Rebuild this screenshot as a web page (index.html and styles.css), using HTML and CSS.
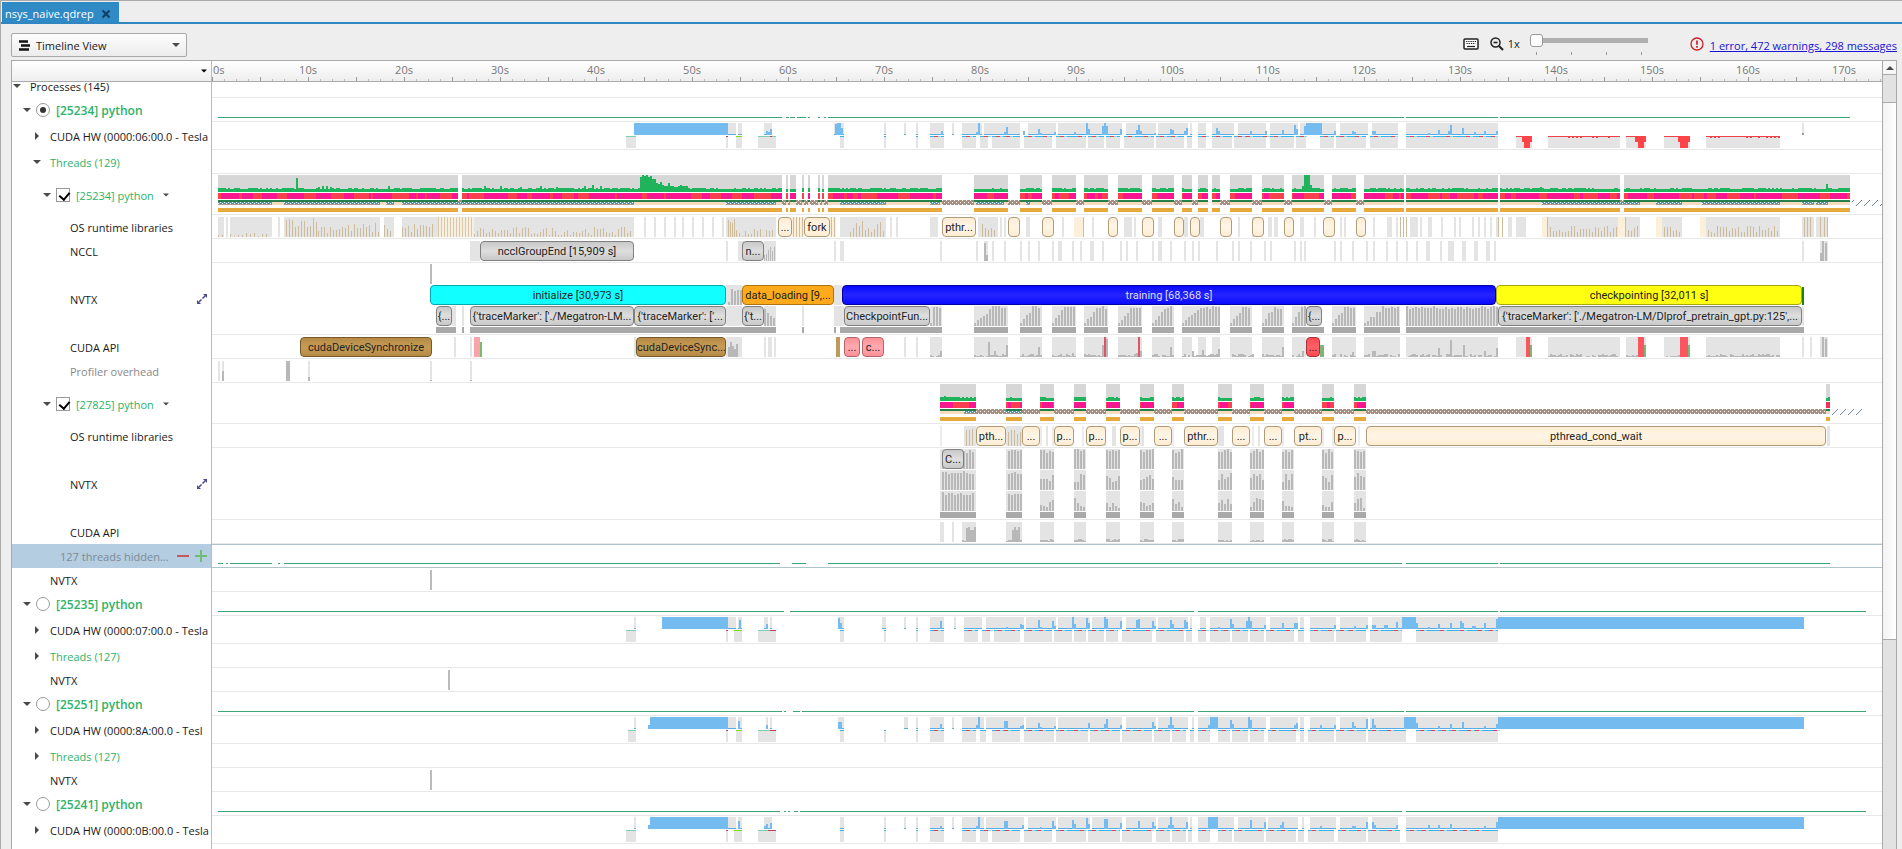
FILE: index.html
```html
<!DOCTYPE html>
<html lang="en">
<head>
<meta charset="utf-8">
<title>nsys_naive.qdrep</title>
<link rel="stylesheet" href="styles.css">
</head>
<body>
<svg class="defs" aria-hidden="true">
  <defs>
    <symbol id="i-down" viewBox="0 0 8 8"><path d="M0 2h8L4 6z" fill="currentColor"/></symbol>
    <symbol id="i-right" viewBox="0 0 8 8"><path d="M2 0v8l4-4z" fill="currentColor"/></symbol>
    <symbol id="i-up" viewBox="0 0 8 8"><path d="M0 6h8L4 2z" fill="currentColor"/></symbol>
    <symbol id="i-zoomto" viewBox="0 0 12 12"><path d="M3 9l2.500-2.500M6.500 5.500L9 3" stroke="#4a4a90" stroke-width="1.500"/><path d="M7 1h4v4zM1 7v4h4z" fill="#4a4a90"/></symbol>
    <pattern id="wait" width="4" height="4" patternUnits="userSpaceOnUse"><rect width="4" height="4" fill="#a58f80"/><path d="M0 0h1v1h-1zM2 2h1v1h-1z" fill="#fff"/></pattern>
    <pattern id="busy" width="4" height="2" patternUnits="userSpaceOnUse"><rect width="4" height="2" fill="#4d96b8"/><path d="M0 0h1v1h-1zM2 1h1v1h-1z" fill="#fff"/></pattern>
    <pattern id="gone" y="2" width="8" height="6" patternUnits="userSpaceOnUse"><path d="M0 6L6 0" stroke="#6a7fae" fill="none"/></pattern>
  </defs>
</svg>

<nav class="tabs">
  <div class="tab"><span>nsys_naive.qdrep</span>
    <button class="icon-btn" aria-label="Close tab"><svg width="10" height="10" viewBox="0 0 10 10"><path d="M1.500 1.500l7 7M8.500 1.500l-7 7" stroke="#0d3f63" stroke-width="2"/></svg></button>
  </div>
</nav>

<header class="toolbar">
  <div class="view-picker">
    <svg class="lead" width="11" height="11" viewBox="0 0 11 11"><path d="M0 1.500h9M2 5.500h9M0 9.500h10" stroke="#111" stroke-width="2.500"/></svg>
    <select aria-label="View"><option>Timeline View</option></select>
    <svg class="caret" width="8" height="8"><use href="#i-down"/></svg>
  </div>
  <div class="zoombar">
    <button class="icon-btn" aria-label="Keyboard shortcuts"><svg width="16" height="12" viewBox="0 0 16 12"><rect x="1" y="1" width="14" height="10" rx="1" fill="#fff" stroke="#222" stroke-width="1.500"/><path d="M3 3.500h10M3.500 5.500h9" stroke="#222" stroke-width="1.200" stroke-dasharray="1.300 .9"/><path d="M4 8.500h8" stroke="#222" stroke-width="1.200"/></svg></button>
    <button class="icon-btn" aria-label="Reset zoom"><svg width="14" height="14" viewBox="0 0 14 14"><circle cx="5.500" cy="5.500" r="4.500" fill="none" stroke="#222" stroke-width="1.500"/><path d="M3.500 5.500h4" stroke="#222" stroke-width="1.600"/><path d="M9 9l4 4" stroke="#222" stroke-width="2.200"/></svg></button>
    <label for="zoom">1x</label>
    <div class="slider">
      <input id="zoom" type="range" min="1" max="100" value="1">
      <div class="marks"><i></i><i></i><i></i><i></i></div>
    </div>
  </div>
  <svg class="alert" width="14" height="14" viewBox="0 0 14 14"><circle cx="7" cy="7" r="6" fill="none" stroke="#c8202c" stroke-width="1.300"/><path d="M7 3.500v4.300M7 9v1.700" stroke="#c8202c" stroke-width="1.700"/></svg>
  <a href="#messages">1 error, 472 warnings, 298 messages</a>
</header>

<main class="frame">
  <section class="timeline">
    <div class="row head">
      <div class="label"><button class="icon-btn dark" aria-label="Row options"><svg width="6" height="6"><use href="#i-down"/></svg></button></div>
      <div class="track" id="ruler"></div>
    </div>
    <div class="rows">
      <div class="row l0"><div class="label"><button class="icon-btn" aria-label="Collapse"><svg width="8" height="8"><use href="#i-down"/></svg></button><span>Processes (145)</span></div><div class="track"></div></div>

      <div class="row l1"><div class="label"><button class="icon-btn" aria-label="Collapse"><svg width="8" height="8"><use href="#i-down"/></svg></button><input type="radio" name="proc" id="p1" checked><label for="p1">[25234] python</label></div><div class="track" data-track="cpu1"></div></div>
      <div class="row l2 gpu"><div class="label"><button class="icon-btn" aria-label="Expand"><svg width="8" height="8"><use href="#i-right"/></svg></button><span>CUDA HW (0000:06:00.0 - Tesla</span></div><div class="track" data-track="gpu1"></div></div>
      <div class="row l2"><div class="label green"><button class="icon-btn" aria-label="Collapse"><svg width="8" height="8"><use href="#i-down"/></svg></button><span>Threads (129)</span></div><div class="track"></div></div>

      <div class="row l3 thread"><div class="label green"><button class="icon-btn" aria-label="Collapse"><svg width="8" height="8"><use href="#i-down"/></svg></button><input type="checkbox" id="t1" checked><label for="t1">[25234] python</label><button class="icon-btn more" aria-label="Thread options"><svg width="6" height="6"><use href="#i-down"/></svg></button></div><div class="track" data-track="thread1"></div></div>
      <div class="row l4"><div class="label"><span>OS runtime libraries</span></div><div class="track" data-track="os1"></div></div>
      <div class="row l4"><div class="label"><span>NCCL</span></div><div class="track" data-track="nccl"></div></div>
      <div class="row l4 nvtx"><div class="label"><span>NVTX</span><button class="icon-btn end" aria-label="Fit row"><svg width="12" height="12"><use href="#i-zoomto"/></svg></button></div><div class="track" data-track="nvtx1"></div></div>
      <div class="row l4"><div class="label"><span>CUDA API</span></div><div class="track" data-track="api1"></div></div>
      <div class="row l4"><div class="label muted"><span>Profiler overhead</span></div><div class="track" data-track="overhead"></div></div>

      <div class="row l3 thread"><div class="label green"><button class="icon-btn" aria-label="Collapse"><svg width="8" height="8"><use href="#i-down"/></svg></button><input type="checkbox" id="t2" checked><label for="t2">[27825] python</label><button class="icon-btn more" aria-label="Thread options"><svg width="6" height="6"><use href="#i-down"/></svg></button></div><div class="track" data-track="thread2"></div></div>
      <div class="row l4"><div class="label"><span>OS runtime libraries</span></div><div class="track" data-track="os2"></div></div>
      <div class="row l4 nvtx"><div class="label"><span>NVTX</span><button class="icon-btn end" aria-label="Fit row"><svg width="12" height="12"><use href="#i-zoomto"/></svg></button></div><div class="track" data-track="nvtx2"></div></div>
      <div class="row l4"><div class="label"><span>CUDA API</span></div><div class="track" data-track="api2"></div></div>
      <div class="row hidden-threads selected"><div class="label muted"><span>127 threads hidden...</span><button class="icon-btn end" aria-label="Show fewer"><svg width="12" height="12" viewBox="0 0 12 12"><path d="M0 6h12" stroke="#c4585e" stroke-width="2"/></svg></button><button class="icon-btn" aria-label="Show more"><svg width="12" height="12" viewBox="0 0 12 12"><path d="M0 6h12M6 0v12" stroke="#6fbf73" stroke-width="2"/></svg></button></div><div class="track" data-track="rest"></div></div>
      <div class="row l2"><div class="label leaf"><span>NVTX</span></div><div class="track" data-track="mark1"></div></div>

      <div class="row l1"><div class="label"><button class="icon-btn" aria-label="Collapse"><svg width="8" height="8"><use href="#i-down"/></svg></button><input type="radio" name="proc" id="p2"><label for="p2">[25235] python</label></div><div class="track" data-track="cpu2"></div></div>
      <div class="row l2 gpu"><div class="label"><button class="icon-btn" aria-label="Expand"><svg width="8" height="8"><use href="#i-right"/></svg></button><span>CUDA HW (0000:07:00.0 - Tesla</span></div><div class="track" data-track="gpu2"></div></div>
      <div class="row l2"><div class="label green"><button class="icon-btn" aria-label="Expand"><svg width="8" height="8"><use href="#i-right"/></svg></button><span>Threads (127)</span></div><div class="track"></div></div>
      <div class="row l2"><div class="label leaf"><span>NVTX</span></div><div class="track" data-track="mark2"></div></div>

      <div class="row l1"><div class="label"><button class="icon-btn" aria-label="Collapse"><svg width="8" height="8"><use href="#i-down"/></svg></button><input type="radio" name="proc" id="p3"><label for="p3">[25251] python</label></div><div class="track" data-track="cpu3"></div></div>
      <div class="row l2 gpu"><div class="label"><button class="icon-btn" aria-label="Expand"><svg width="8" height="8"><use href="#i-right"/></svg></button><span>CUDA HW (0000:8A:00.0 - Tesl</span></div><div class="track" data-track="gpu3"></div></div>
      <div class="row l2"><div class="label green"><button class="icon-btn" aria-label="Expand"><svg width="8" height="8"><use href="#i-right"/></svg></button><span>Threads (127)</span></div><div class="track"></div></div>
      <div class="row l2"><div class="label leaf"><span>NVTX</span></div><div class="track" data-track="mark1"></div></div>

      <div class="row l1"><div class="label"><button class="icon-btn" aria-label="Collapse"><svg width="8" height="8"><use href="#i-down"/></svg></button><input type="radio" name="proc" id="p4"><label for="p4">[25241] python</label></div><div class="track" data-track="cpu4"></div></div>
      <div class="row l2 gpu"><div class="label"><button class="icon-btn" aria-label="Expand"><svg width="8" height="8"><use href="#i-right"/></svg></button><span>CUDA HW (0000:0B:00.0 - Tesla</span></div><div class="track" data-track="gpu4"></div></div>
      <div class="row l2"><div class="label"></div><div class="track"></div></div>
    </div>
  </section>
  <div class="scrollbar">
    <button class="icon-btn" aria-label="Scroll up"><svg width="8" height="8"><use href="#i-up"/></svg></button>
    <div class="groove"><div class="thumb"></div></div>
  </div>
</main>
<script src="timeline.js"></script>
</body>
</html>
```

FILE: styles.css
```css
* { box-sizing: border-box; }

body {
  margin: 0;
  height: 100vh;
  display: flex;
  flex-direction: column;
  overflow: hidden;
  background: #eee;
  border-left: 1px solid #aaa;
  color: #1a1a1a;
  font: 11px/16px "Open Sans", "Noto Sans", sans-serif;
}

.defs { position: absolute; width: 0; height: 0; }

.icon-btn {
  display: flex;
  align-items: center;
  justify-content: center;
  flex: none;
  padding: 0;
  border: 0;
  background: none;
  color: #4a4a4a;
}

/* Document tabs */
.tabs {
  flex: none;
  display: flex;
  height: 24px;
  padding: 1px 0 0 1px;
  border-top: 1px solid #aaa;
  border-bottom: 2px solid #2f86c1;
}
.tab {
  display: flex;
  align-items: center;
  gap: 7px;
  padding: 3px 8px 0 3px;
  background: #2f8ac6;
  color: #fff;
}

/* Toolbar */
.toolbar {
  flex: none;
  display: flex;
  align-items: center;
  height: 36px;
  padding: 0 5px 0 10px;
}
.view-picker { position: relative; width: 176px; }
.view-picker select {
  appearance: none;
  width: 100%;
  height: 24px;
  margin-top: 6px;
  padding: 1px 24px 0;
  border: 1px solid #a8a8a8;
  border-radius: 2px;
  background: linear-gradient(#fefefe, #ececec);
  color: inherit;
  font: inherit;
}
.view-picker svg { position: absolute; top: 14px; pointer-events: none; color: #4a4a4a; }
.view-picker .lead { left: 8px; top: 13px; }
.view-picker .caret { right: 7px; }

.zoombar { display: flex; align-items: center; gap: 4px; margin: 4px 0 0 auto; }
.zoombar .icon-btn { margin-right: 7px; }
.zoombar .icon-btn + .icon-btn { margin-right: 0; }
.slider { width: 118px; margin: 0 42px 0 6px; }
.slider input {
  appearance: none;
  display: block;
  width: 100%;
  height: 14px;
  margin: 0;
  background: linear-gradient(#b0b0b0, #b0b0b0) center / 100% 5px no-repeat;
}
.slider input::-webkit-slider-thumb {
  appearance: none;
  width: 13px;
  height: 13px;
  border: 1px solid #999;
  border-radius: 3px;
  background: #fff;
}
.marks { display: flex; justify-content: space-between; padding: 4px 6px 0; }
.marks i { width: 1px; height: 3px; background: #999; }
.alert { margin: 4px 6px 0 0; }
.toolbar a { color: #1a13d8; margin-top: 8px; }

/* Timeline frame */
.frame {
  flex: 1;
  min-height: 0;
  display: flex;
  margin: 0 5px 0 10px;
  border: 1px solid #aaa;
  border-bottom: 0;
  background: #fff;
}
.timeline { flex: 1; min-width: 0; display: flex; flex-direction: column; }
.rows { flex: 1; min-height: 0; overflow: hidden; }
.rows .row:first-child { margin-top: -8px; }

.row { display: flex; height: 24px; }
.row.gpu { height: 28px; }
.row.thread { height: 41px; }
.row.nvtx { height: 72px; }

.label {
  flex: none;
  display: flex;
  align-items: center;
  width: 200px;
  padding-right: 1px;
  border-right: 1px solid #bbb;
  overflow: hidden;
  white-space: nowrap;
}
.label span, .label label { padding-top: 2px; }
.track {
  position: relative;
  flex: 1;
  min-width: 0;
  border-bottom: 1px solid #e8e8e8;
  overflow: hidden;
}
.track svg { display: block; width: 100%; }

.head {
  flex: none;
  height: 21px;
  background: linear-gradient(#fff, #eee);
  border-bottom: 1px solid #aaa;
}
.head .label { justify-content: flex-end; padding-right: 4px; }
.head .track { border: 0; }
.icon-btn.dark { color: #000; }
.tick-label {
  position: absolute;
  top: 1px;
  color: #777;
  transform: translateX(-50%);
}
.tick-label.first { transform: none; }

.green, .l1 label { color: #2bb368; }
.l1 label { font-size: 12px; font-weight: 600; }
.muted { color: #888; }

.l0 .label { gap: 9px; padding-left: 1px; }
.l1 .label { gap: 5px; padding-left: 11px; }
.l1 .label label { margin-left: 1px; }
.l2 .label { gap: 9px; padding-left: 21px; }
.l2 .leaf { padding-left: 38px; }
.l3 .label { gap: 5px; padding-left: 31px; }
.l3 .label label { margin-left: 1px; }
.l3 .more { margin-left: 4px; }
.l4 .label { padding-left: 58px; }
.hidden-threads .label { gap: 6px; padding: 0 4px 0 48px; }
.label .end { margin-left: auto; margin-right: 2px; }
.hidden-threads .end { margin-right: 0; }

.selected .label { background: #b4cde1; color: #7c8a96; }
.selected .track { border-bottom-color: #b0c3cd; box-shadow: inset 0 1px #b0c3cd; }

input[type="radio"], input[type="checkbox"] {
  appearance: none;
  flex: none;
  position: relative;
  width: 14px;
  height: 14px;
  margin: 0;
  border: 1px solid #999;
  background: #fff;
}
input[type="radio"] { border-radius: 50%; }
input[type="radio"]:checked::after {
  content: "";
  position: absolute;
  inset: 3px;
  border-radius: 50%;
  background: #333;
}
input[type="checkbox"]:checked::after {
  content: "";
  position: absolute;
  left: 4px;
  top: 1px;
  width: 5px;
  height: 8px;
  border: solid #000;
  border-width: 0 2px 2px 0;
  rotate: 40deg;
}

/* Named ranges drawn over a track */
.event {
  position: absolute;
  height: 20px;
  border: 1px solid #888;
  border-radius: 4px;
  color: #222;
  font: 11px/20px Roboto, sans-serif;
  text-align: center;
  white-space: nowrap;
  overflow: hidden;
}
.lane1 { top: 2px; }
.lane2 { top: 22px; }
.lane3 { top: 43px; }
.lane0 { top: 1px; }
.grey { background: linear-gradient(#c8c8c8, #dedede 50%, #c8c8c8); border-color: #808080; }
.cream { background: linear-gradient(#feecd2, #fff5e6 50%, #feecd2); border-color: #b09c78; }
.cyan { background: #1ff; border-color: #0aa; }
.orange { background: #ffa91c; border-color: #b07410; }
.blue { background: linear-gradient(#0a0aff, #2424ff 50%, #0a0aff); border-color: #0000a0; color: #dde; }
.yellow { background: #ff1; border-color: #a8a810; }
.tan { background: linear-gradient(#b48a45, #c69c55 50%, #b48a45); border-color: #775a28; }
.pink { background: linear-gradient(#ff9097, #ffaab0 50%, #ff9097); border-color: #b0666c; }
.red { background: linear-gradient(#ff4850, #ff6068 50%, #ff4850); border-color: #a83038; }

.scrollbar {
  flex: none;
  display: flex;
  flex-direction: column;
  width: 14px;
  border-left: 1px solid #aaa;
}
.scrollbar > .icon-btn { height: 13px; background: #f6f6f6; }
.groove {
  flex: 1;
  display: flex;
  flex-direction: column;
  padding-top: 27px;
  background: #e2e2e2;
  border-top: 1px solid #aaa;
}
.thumb {
  flex: none;
  height: 72%;
  border: solid #aaa;
  border-width: 1px 0;
  background: linear-gradient(90deg, #f2f2f2, #fff);
}
```

FILE: timeline.js
```js
const START = 212;
const SPAN = 1670;

const spans = text => text.trim().split(/\s+/).map(s => s.split('-').map(Number));
const pairs = text => text.trim().split(/\s+/).map(s => s.split(':').map(Number));

let seed = 7;
const rnd = () => (seed = (seed * 16807) % 2147483647) / 2147483647;

const rect = (x, y, w, h, fill) => `<rect x="${x}" y="${y}" width="${w}" height="${h}" fill="${fill}"/>`;
const fillSpans = (text, y, h, fill) => spans(text).map(([a, b]) => rect(a, y, b - a, h, fill)).join('');
const bars = (text, base, fill, w = 2) => pairs(text).map(([x, h]) => rect(x, base - h, w, h, fill)).join('');
const ticks = (list, y, h, fill, w = 2) => list.trim().split(/\s+/).map(x => rect(+x, y, w, h, fill)).join('');

function noise(text, base, lo, hi, fill, step = 2, w = step) {
  let out = '';
  for (const [a, b] of spans(text)) {
    for (let x = a; x < b - 1; x += step) {
      const h = Math.round(lo + rnd() * (hi - lo));
      if (h > 0) out += rect(x, base - h, Math.min(w, b - x), h, fill);
    }
  }
  return out;
}

// Bars that climb to full height and stay there.
function ramp(text, base, full, fill, climb = 0.45) {
  let out = '';
  for (const [a, b] of spans(text)) {
    for (let x = a; x < b - 1; x += 3) {
      const t = (x - a) / (b - a);
      const h = t < climb ? 3 + (full - 3) * t / climb * (0.6 + rnd() * 0.4) : full - rnd() * 3;
      out += rect(x, base - Math.round(h), 2, Math.round(h), fill);
    }
  }
  return out;
}

const LIGHT = '#e4e4e4', MID = '#b8b8b8', DARK = '#a9a9a9', SKY = '#74bbf0', BG = '#d7d7d7';

const busy1 = '218-458 462-782 786-788 790-796 802-804 808-810 818-820 822-824 828-942 974-1008 1020-1042 1052-1076 1084-1108 1118-1142 1152-1174 1182-1192 1198-1208 1212-1220 1230-1252 1262-1284 1292-1324 1332-1356 1364-1404 1406-1498 1500-1620 1624-1850';
const busy2 = '940-976 1006-1022 1040-1054 1074-1086 1106-1120 1140-1154 1172-1184 1218-1232 1250-1264 1282-1294 1322-1334 1354-1366 1826-1830';
const iter1 = '974-1008 1020-1042 1052-1076 1084-1108 1118-1142 1152-1174 1182-1220 1230-1252 1262-1284 1292-1306 1332-1356 1364-1400 1406-1498';

function thread(segs, wait, osrt, peaks, end, low, high) {
  let s = fillSpans(segs, 1, 17, BG) + noise(segs, 18, low, high, '#1fb45c') + fillSpans(segs, 16, 2, '#1fb45c') + bars(peaks, 18, '#1fb45c');
  s += fillSpans(segs, 19, 6, '#f8404e');
  for (const [a, b] of spans(segs)) {
    for (let x = a + Math.floor(rnd() * 6); x < b;) {
      const w = Math.min(b - x, 2 + Math.floor(rnd() * 26));
      s += rect(x, 19, w, 6, '#fb1590');
      if (w > 10) s += rect(x + 4, 22, 2, 3, '#d0307c');
      x += w + 2 + Math.floor(rnd() * 16);
    }
  }
  s += fillSpans(wait, 26, 5, 'url(#wait)');
  s += fillSpans(segs, 26, 2, '#27804a') + fillSpans(segs, 28, 3, '#f7dcc0');
  if (osrt) s += fillSpans(osrt, 28, 2, 'url(#busy)') + fillSpans(osrt, 30, 1, '#b09a8a');
  s += fillSpans(segs, 34, 4, '#e6a93c');
  s += rect(end[0], 26, end[1] - end[0], 6, 'url(#gone)');
  return s;
}

function gpu(up, down, blocks, peaks, mini, lime) {
  let s = fillSpans(up, 1, 12, LIGHT) + fillSpans(up, 12, 1, '#58ade6');
  s += fillSpans(down, 14, 12, LIGHT);
  for (const [a, b] of spans(down)) {
    if (b < 780) { s += rect(a, 14, b - a, 1, '#7fcdb4'); continue; }
    s += rect(a, 14, b - a, 1, '#35b4e8');
    for (let x = a + 4; x < b - 2; x += 8 + Math.floor(rnd() * 14)) s += rect(x, 14, 4, 1, '#d8445c') + rect(x + 4, 14, 3, 1, '#86dcec');
  }
  s += fillSpans(lime, 14, 1, '#7fe010') + fillSpans(mini, 14, 1, '#c0405a');
  return s + fillSpans(blocks, 1, 12, SKY) + bars(peaks, 13, SKY);
}

const line = text => fillSpans(text, 19, 1, '#3aa575');

const TRACKS = {
  cpu1: line('218-782 786-789 790-795 797-806 808-810 818-820 824-826 828-1404 1406-1498 1500-1850'),
  rest: line('218-223 226-228 230-272 278-280 284-780 792-806 828-1402 1406-1498 1500-1830'),
  cpu2: line('218-784 790-1194 1198-1498 1500-1866'),
  cpu3: line('218-782 784-786 793-800 802-1194 1198-1404 1406-1866'),
  cpu4: line('218-780 784-786 788-790 794-798 800-1402 1406-1866'),

  gpu1: gpu(
    '728-736 738-742 764-772 834-844 884-886 904-906 916-918 930-944 952-954 962-982 984-1020 1028-1056 1058-1122 1126-1156 1158-1188 1190-1192 1198-1206 1212-1234 1238-1266 1270-1298 1300-1336 1340-1368 1372-1398 1406-1498',
    '626-636 726-728 736-742 758-776 840-844 884-886 916-918 930-944 962-976 980-988 992-1020 1024-1052 1056-1086 1088-1104 1106-1120 1124-1154 1156-1184 1187-1192 1198-1206 1212-1232 1234-1266 1270-1294 1296-1306 1320-1334 1336-1366 1370-1398 1406-1498',
    '634-728 1306-1322',
    '766:4 768:3 770:6 835:11 837:12 839:12 841:7 941:4 976:3 978:12 1004:3 1006:8 1023:4 1038:6 1040:2 1054:3 1074:3 1086:12 1088:6 1102:9 1104:12 1106:9 1120:6 1136:5 1138:10 1140:4 1154:2 1170:6 1172:5 1184:4 1186:7 1216:7 1218:4 1250:4 1265:4 1282:5 1294:10 1296:6 1304:9 1334:4 1352:4 1354:3 1372:4 1374:4 1428:2 1438:5 1448:4 1450:10 1462:7 1474:3 1484:4 1496:4',
    '726-728 770-772', '736-742')
    + fillSpans('1516-1532 1548-1620 1626-1646 1664-1690 1706-1780', 14, 12, LIGHT)
    + fillSpans('1516-1532 1548-1620 1626-1646 1664-1690 1706-1780', 14, 1, '#f04048')
    + fillSpans('1524-1530 1638-1644 1680-1688', 14, 12, '#ff4449') + fillSpans('1522-1532 1635-1646 1678-1690', 14, 6, '#ff4449')
    + noise('1548-1620 1706-1780', 16, 0, 1, '#f04048', 4, 2) + rect(1802, 1, 2, 11, LIGHT) + rect(1802, 11, 2, 2, '#999'),

  gpu2: gpu(
    '634-636 728-736 738-742 764-768 770-772 838-844 882-886 904-906 916-918 930-944 954-956 964-982 986-1024 1026-1056 1058-1090 1092-1122 1126-1156 1158-1188 1190-1192 1200-1206 1210-1266 1270-1298 1300-1304 1310-1336 1340-1368 1372-1402 1416-1498',
    '626-636 726-728 734-742 758-776 840-844 884-886 916-918 930-944 964-978 982-990 994-1020 1024-1052 1054-1072 1074-1086 1088-1104 1106-1118 1122-1152 1156-1184 1186-1192 1198-1206 1210-1230 1232-1248 1250-1264 1266-1294 1298-1304 1310-1334 1336-1366 1370-1402 1416-1498',
    '662-728 1402-1416 1498-1804',
    '739:9 766:5 838:11 840:6 940:8 1006:2 1020:5 1022:4 1038:9 1040:2 1052:8 1054:3 1072:12 1074:5 1086:11 1088:6 1104:12 1106:10 1120:8 1136:9 1138:10 1152:8 1154:3 1170:9 1172:5 1184:9 1186:7 1218:2 1230:10 1232:5 1246:8 1248:12 1250:8 1264:4 1282:6 1294:6 1296:6 1334:4 1354:3 1366:4 1372:4 1374:4 1384:4 1386:4 1396:7 1416:6 1428:2 1438:5 1450:6 1460:8 1462:6 1472:3 1474:3 1484:6 1496:10',
    '726-728 770-776', '734-742'),

  gpu3: gpu(
    '634-636 728-736 738-742 766-768 770-772 838-844 904-908 916-918 930-944 952-954 962-984 986-1024 1026-1056 1058-1122 1126-1156 1158-1188 1192-1194 1198-1266 1270-1298 1300-1304 1310-1336 1340-1368 1370-1404 1416-1498',
    '628-636 726-728 736-742 758-776 840-844 884-886 916-918 930-944 962-976 980-986 992-1020 1024-1054 1056-1088 1090-1120 1122-1152 1154-1170 1172-1186 1190-1194 1198-1210 1218-1230 1232-1248 1250-1264 1268-1296 1300-1304 1308-1334 1336-1366 1368-1406 1416-1498',
    '650-728 1210-1218 1404-1416 1498-1804',
    '648:4 738:8 766:4 838:7 840:7 940:5 976:4 978:12 1004:8 1006:8 1020:3 1022:4 1038:6 1040:2 1054:3 1088:6 1104:5 1106:10 1120:4 1152:7 1154:3 1168:4 1170:12 1172:4 1208:4 1230:9 1232:5 1248:12 1250:9 1294:4 1296:6 1320:4 1334:4 1352:7 1354:3 1366:10 1372:10 1374:4 1416:6 1438:3 1450:5 1462:7 1484:3 1496:5',
    '726-728 770-776', '736-742'),

  gpu4: gpu(
    '634-636 728-736 738-742 764-772 840-844 884-886 904-906 916-918 930-944 952-954 962-984 986-1024 1028-1056 1058-1090 1092-1122 1126-1156 1158-1188 1190-1192 1198-1234 1238-1266 1268-1298 1302-1304 1310-1336 1340-1368 1372-1398 1406-1498',
    '626-636 726-728 734-742 758-776 840-844 884-886 916-918 930-944 962-976 980-988 992-1020 1024-1052 1056-1086 1088-1120 1122-1152 1156-1170 1172-1186 1188-1192 1198-1210 1218-1232 1234-1264 1266-1296 1298-1304 1308-1334 1338-1366 1368-1400 1406-1498',
    '650-728 1208-1218 1498-1804',
    '648:4 738:8 764:3 766:5 770:6 940:3 976:3 978:12 1004:8 1006:8 1022:4 1040:2 1052:8 1054:3 1072:9 1074:5 1086:11 1088:5 1104:10 1106:10 1120:6 1138:8 1152:7 1154:3 1168:4 1170:12 1172:4 1186:7 1250:9 1264:7 1280:4 1282:7 1320:3 1352:3 1354:3 1366:7 1372:7 1374:4 1396:4 1428:4 1438:4 1450:5 1484:3 1496:7',
    '726-728 768-776', '734-742'),

  thread1: thread(busy1,
    '456-464 780-830 942-974 1008-1020 1042-1052 1076-1084 1108-1118 1142-1152 1174-1182 1192-1198 1220-1230 1252-1262 1284-1292 1324-1332 1356-1364 1620-1624',
    '218-272 284-380 386-394 402-634 726-776 840-886 930-940 976-1004 1026-1030 1542-1640 1656-1682 1702-1780 1802-1814 1816-1828',
    '296:14 388:6 318:5 322:6 326:6 330:5 484:6 500:6 520:5 540:6 556:5 584:6 592:7 600:6 640:15 642:17 644:16 646:17 648:15 650:16 652:13 654:13 656:9 658:8 660:10 662:7 664:6 666:6 668:9 670:6 672:6 674:5 676:5 678:6 680:7 682:6 684:6 686:6 1302:6 1304:17 1306:17 1308:17 1310:7 1540:5 1826:8',
    [1852, 1882], 3, 4),

  thread2: thread(busy2, '976-1826', '964-976 1006-1022', '944:5', [1830, 1863], 3, 4)
    + rect(1826, 19, 4, 6, '#f83058'),

  os1: fillSpans('218-224 226-228 230-272 278-280 284-380 384-394 402-634 726-776 840-886 930-938 978-998 1026-1030 1062-1064 1124-1130 1158-1162 1184-1188 1200-1204 1252-1256 1268-1272 1274-1278 1300-1304 1387-1392 1410-1418 1428-1432 1508-1512 1516-1526 1548-1620 1624-1640 1662-1682 1704-1780 1802-1814 1816-1828', 2, 20, LIGHT)
    + ticks('644 654 664 674 682 692 702 712 722 890 896 1000 1004 1092 1130 1134 1238 1314 1340 1344 1373 1396 1420 1441 1454 1459 1472 1478 1484 1490 1496', 2, 20, LIGHT)
    + fillSpans('438-474', 2, 20, '#f6efe2')
    + noise('218-224 230-272', 22, 0, 4, '#cbbca0', 4, 1)
    + noise('286-318', 22, 10, 20, '#cdbd9d', 3, 1) + noise('318-380 384-394 402-436', 22, 4, 14, '#cdbd9d', 3, 1)
    + ticks('438 441 444 447 450 453 456 459 462 465 468 471', 2, 20, '#d9c8a6', 1)
    + noise('474-634', 22, 2, 10, '#cdbd9d', 3, 1) + noise('728-736', 22, 12, 20, '#cdbd9d', 2, 1) + noise('736-776', 22, 1, 9, '#cdbd9d', 3, 1)
    + fillSpans('792-804 830-836 1074-1084 1542-1548 1618-1626 1656-1662 1700-1706', 2, 20, '#fdf0da')
    + ticks('793 796 799 802 831 834 1083 1400 1403 1406 1498 1502 1547 1625 1804 1807 1810 1820 1824 1827', 2, 20, '#cdbd9d', 1)
    + noise('850-886', 22, 5, 17, '#cdbd9d', 3, 1) + noise('982-998', 22, 4, 14, '#cdbd9d', 3, 1)
    + noise('1550-1618 1628-1640 1664-1682 1708-1780', 22, 4, 11, '#cdbd9d', 3, 1),

  nccl: fillSpans('470-480 738-744 764-776 840-844 984-988 1058-1062 1090-1094 1158-1162 1426-1430 1448-1454 1462-1466 1474-1478 1486-1490 1820-1828', 2, 20, LIGHT)
    + ticks('726 834 940 976 992 1004 1020 1028 1038 1052 1072 1080 1102 1120 1126 1136 1152 1170 1184 1192 1198 1216 1232 1238 1250 1264 1270 1294 1300 1304 1334 1340 1352 1366 1373 1386 1396 1406 1416 1440 1494 1802', 2, 20, LIGHT)
    + noise('764-776', 22, 6, 18, MID, 2, 1) + bars('984:18 986:6 1820:8 1822:20 1825:18', 22, MID),

  nvtx1: rect(430, 1, 2, 20, '#bbb')
    + fillSpans('726-742 834-842', 22, 20, LIGHT) + ramp('728-742', 42, 16, MID, 0.1)
    + fillSpans('452-456 462-464 726-742 764-776 802-804 834-844 930-942 1802-1804', 43, 20, LIGHT)
    + noise('764-776', 63, 8, 19, MID, 3, 2) + ramp('930-942', 63, 20, MID, 0.1)
    + fillSpans(iter1, 43, 20, LIGHT) + ramp(iter1.replace('1406-1498', ''), 63, 20, MID) + ramp('1406-1498', 63, 20, MID, 0)
    + fillSpans('436-456 462-464 470-776 802-804 834-836 840-942 ' + iter1 + ' 1306-1324 1498-1804', 64, 6, DARK)
    + rect(1802, 24, 2, 18, '#1c801c'),

  api1: fillSpans('726-742 768-772 930-942 ' + iter1.replace('1182-1220', '1182-1192 1198-1206 1212-1220') + ' 1516-1532 1548-1620 1626-1646 1664-1690 1706-1780 1820-1828', 2, 20, LIGHT)
    + ticks('454 470 634 764 774 904 916 1802 1810', 2, 20, LIGHT)
    + noise('728-738', 22, 8, 18, MID) + noise('930-942 ' + iter1 + ' 1548-1620 1626-1638 1664-1680 1706-1780', 22, 0, 3, MID)
    + bars('940:6 988:15 994:6 1006:12 1038:10 1072:4 1102:12 1106:18 1136:4 1140:6 1170:10 1192:6 1202:7 1218:8 1252:3 1282:10 1302:6 1352:5 1372:6 1374:6 1428:3 1438:9 1450:17 1463:12 1484:6 1496:9 1822:20 1825:18', 22, MID)
    + rect(474, 2, 6, 20, '#fba3ab') + rect(480, 7, 2, 15, '#70c070') + rect(836, 2, 4, 20, '#c09a58')
    + fillSpans('1526-1530 1638-1644 1680-1688', 2, 20, '#fb5560') + fillSpans('1104-1106 1138-1140', 2, 20, '#e05565')
    + fillSpans('1320-1324 1530-1532 1644-1646 1688-1690', 10, 12, '#78b878'),

  overhead: ticks('218 308 430 470', 2, 20, LIGHT) + rect(222, 2, 2, 20, LIGHT) + rect(222, 12, 2, 10, MID) + rect(286, 2, 4, 20, '#b8b8b8') + bars('308:4 430:1 470:1', 22, MID),

  os2: fillSpans('964-976 1006-1022 1046-1048 1104-1106 1112-1116 1142-1144 1218-1224 1258-1260 1827-1830', 2, 20, LIGHT)
    + ticks('940 1040 1052 1082 1140 1172 1252 1282 1322 1332 1358', 2, 20, '#ececec')
    + noise('966-976 1008-1022', 22, 12, 18, '#cdbd9d', 3, 1),

  nvtx2: ['1', '22', '43'].map((y, i) => fillSpans(busy2.replace(' 1826-1830', ''), +y, 20, LIGHT)
      + noise(busy2.replace('940-976 1006-1022', '').replace(' 1826-1830', ''), +y + 20, [16, 7, 3][i], [20, 17, 13][i], MID, 3, 2)
      + noise('942-976 1008-1022', +y + 20, 16, 19, MID, 3, 2)).join('')
    + fillSpans(busy2.replace(' 1826-1830', ''), 64, 6, DARK),

  api2: fillSpans('940-944 952-954 962-976 ' + busy2.replace('940-976', '').replace(' 1826-1830', ''), 2, 20, LIGHT)
    + noise('966-976 1012-1020', 22, 11, 16, MID) + noise(busy2.replace('940-976', '962-968').replace(' 1826-1830', ''), 22, 1, 3, MID),

  mark1: rect(430, 2, 2, 20, '#bbb'),
  mark2: rect(448, 2, 2, 20, '#bbb')
};

// [start, end, lane, colour, text]
const EVENTS = {
  os1: [[778, 792, 1, 'cream', '...'], [804, 830, 1, 'cream', 'fork'], [942, 976, 1, 'cream', 'pthr...'],
    ...spans('1008-1020 1042-1054 1108-1118 1142-1154 1174-1184 1190-1200 1220-1232 1252-1264 1284-1294 1323-1335 1356-1366').map(([a, b]) => [a, b, 1, 'cream', ''])],
  nccl: [[480, 634, 1, 'grey', 'ncclGroupEnd [15,909 s]'], [742, 764, 1, 'grey', 'n...']],
  nvtx1: [[430, 726, 2, 'cyan', 'initialize [30,973 s]'], [742, 834, 2, 'orange', 'data_loading [9,...'],
    [842, 1496, 2, 'blue', 'training [68,368 s]'], [1496, 1802, 2, 'yellow', 'checkpointing [32,011 s]'],
    [436, 452, 3, 'grey', '{...'], [470, 634, 3, 'grey', "{'traceMarker': ['./Megatron-LM..."],
    [634, 726, 3, 'grey', "{'traceMarker': ['..."], [742, 764, 3, 'grey', "{'t..."],
    [844, 930, 3, 'grey', 'CheckpointFun...'], [1306, 1322, 3, 'grey', '{...'],
    [1498, 1802, 3, 'grey', "{'traceMarker': ['./Megatron-LM/Dlprof_pretrain_gpt.py:125',..."]],
  api1: [[300, 432, 1, 'tan', 'cudaDeviceSynchronize'], [636, 726, 1, 'tan', 'cudaDeviceSync...'],
    [844, 860, 1, 'pink', '...'], [862, 884, 1, 'pink', 'c...'], [1306, 1320, 1, 'red', '...']],
  os2: [[976, 1006, 1, 'cream', 'pth...'], [1022, 1040, 1, 'cream', '...'], [1054, 1074, 1, 'cream', 'p...'],
    [1086, 1106, 1, 'cream', 'p...'], [1120, 1140, 1, 'cream', 'p...'], [1154, 1172, 1, 'cream', '...'],
    [1184, 1218, 1, 'cream', 'pthr...'], [1232, 1250, 1, 'cream', '...'], [1264, 1282, 1, 'cream', '...'],
    [1294, 1322, 1, 'cream', 'pt...'], [1334, 1356, 1, 'cream', 'p...'], [1366, 1826, 1, 'cream', 'pthread_cond_wait']],
  nvtx2: [[942, 964, 0, 'grey', 'C...']]
};

const percent = x => (x * 100 / SPAN) + '%';
const plot = (height, body) =>
  `<svg viewBox="${START} 0 ${SPAN} ${height}" height="${height}" preserveAspectRatio="none" shape-rendering="crispEdges">${body}</svg>`;

for (const el of document.querySelectorAll('[data-track]')) {
  const name = el.dataset.track;
  el.innerHTML = plot(el.clientHeight, TRACKS[name]);
  for (const [a, b, lane, colour, text] of EVENTS[name] || []) {
    const ev = document.createElement('div');
    ev.className = `event lane${lane} ${colour}`;
    ev.style.left = percent(a - START);
    ev.style.width = percent(b - a);
    ev.textContent = text;
    el.append(ev);
  }
}

const ruler = document.getElementById('ruler');
let marks = '';
for (let k = 0; k < 140; k++) {
  const tall = k % 4 === 0;
  marks += rect(START + k * 12, tall ? 16 : 18, 1, 4, tall ? '#999' : '#bbb');
}
ruler.innerHTML = plot(20, marks);
for (let s = 0; s <= 170; s += 10) {
  const label = document.createElement('span');
  label.className = s ? 'tick-label' : 'tick-label first';
  label.style.left = percent(s ? s * 9.6 : 1);
  label.textContent = s + 's';
  ruler.append(label);
}
```
